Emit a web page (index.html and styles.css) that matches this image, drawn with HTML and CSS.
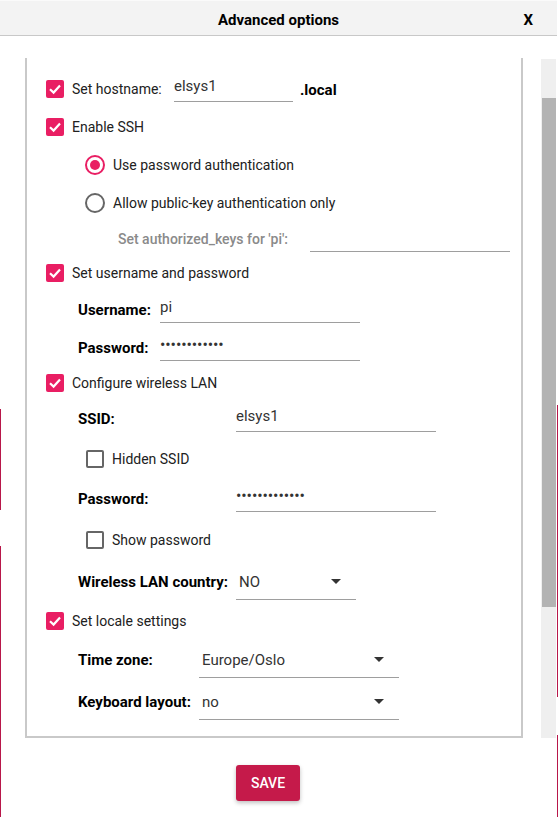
FILE: index.html
```html
<!DOCTYPE html>
<html lang="en">
<head>
<meta charset="utf-8">
<title>Advanced options</title>
<link rel="stylesheet" href="styles.css">
</head>
<body>
<div class="dialog">
  <header class="titlebar">
    <h1 class="title">Advanced options</h1>
    <button class="close" type="button">X</button>
  </header>
  <main class="content">
    <div class="scroller">
      <div class="panel">
        <div class="rows">
          <div class="row check-row">
            <span class="cb on"><svg viewBox="0 0 18 18"><path d="M4 9.2 L7.6 12.6 L14 5.6"/></svg></span>
            <span class="txt host-label">Set hostname:</span>
            <span class="field host-field">elsys1</span>
            <span class="suffix">.local</span>
          </div>
          <div class="row check-row">
            <span class="cb on"><svg viewBox="0 0 18 18"><path d="M4 9.2 L7.6 12.6 L14 5.6"/></svg></span>
            <span class="txt">Enable SSH</span>
          </div>
          <div class="row radio-row">
            <span class="radio on"></span>
            <span class="txt">Use password authentication</span>
          </div>
          <div class="row radio-row">
            <span class="radio"></span>
            <span class="txt">Allow public-key authentication only</span>
          </div>
          <div class="row keys-row">
            <span class="keys-label">Set authorized_keys for 'pi':</span>
            <span class="field wide"></span>
          </div>
          <div class="row check-row">
            <span class="cb on"><svg viewBox="0 0 18 18"><path d="M4 9.2 L7.6 12.6 L14 5.6"/></svg></span>
            <span class="txt">Set username and password</span>
          </div>
          <div class="row form-row">
            <span class="lbl lbl-user">Username:</span>
            <span class="field wide">pi</span>
          </div>
          <div class="row form-row">
            <span class="lbl lbl-user">Password:</span>
            <span class="field wide dots">••••••••••••</span>
          </div>
          <div class="row check-row">
            <span class="cb on"><svg viewBox="0 0 18 18"><path d="M4 9.2 L7.6 12.6 L14 5.6"/></svg></span>
            <span class="txt">Configure wireless LAN</span>
          </div>
          <div class="row form-row">
            <span class="lbl lbl-wifi">SSID:</span>
            <span class="field wide">elsys1</span>
          </div>
          <div class="row sub-row">
            <span class="cb"></span>
            <span class="txt">Hidden SSID</span>
          </div>
          <div class="row form-row">
            <span class="lbl lbl-wifi">Password:</span>
            <span class="field wide dots">•••••••••••••</span>
          </div>
          <div class="row sub-row">
            <span class="cb"></span>
            <span class="txt">Show password</span>
          </div>
          <div class="row form-row">
            <span class="lbl lbl-wifi">Wireless LAN country:</span>
            <span class="combo narrow"><span class="val">NO</span><span class="arrow"></span></span>
          </div>
          <div class="row check-row">
            <span class="cb on"><svg viewBox="0 0 18 18"><path d="M4 9.2 L7.6 12.6 L14 5.6"/></svg></span>
            <span class="txt">Set locale settings</span>
          </div>
          <div class="row form-row">
            <span class="lbl lbl-locale">Time zone:</span>
            <span class="combo wide"><span class="val">Europe/Oslo</span><span class="arrow"></span></span>
          </div>
          <div class="row form-row">
            <span class="lbl lbl-locale">Keyboard layout:</span>
            <span class="combo wide"><span class="val">no</span><span class="arrow"></span></span>
          </div>
        </div>
      </div>
      <div class="scrollbar"><div class="thumb"></div></div>
    </div>
    <div class="actions">
      <button class="save" type="button">SAVE</button>
    </div>
  </main>
</div>
<span class="edge edge-l1"></span>
<span class="edge edge-l2"></span>
<span class="edge edge-r1"></span>
<span class="edge edge-r2"></span>
</body>
</html>
```
FILE: styles.css
```css
* { box-sizing: border-box; }
html, body { margin: 0; padding: 0; background: #fff; }
body {
  width: 559px;
  height: 817px;
  overflow: hidden;
  position: relative;
  font-family: Roboto, "Noto Sans", "Liberation Sans", sans-serif;
  font-size: 14px;
  color: #212121;
}
.dialog {
  width: 557px;
  height: 817px;
  background: #fff;
}
.titlebar {
  height: 36px;
  background: #f3f3f3;
  border-top: 1px solid #fafafa;
  border-bottom: 1px solid #c8c8c8;
  display: grid;
  grid-template-columns: 1fr auto 1fr;
  align-items: center;
  padding-top: 3px;
}
.title {
  grid-column: 2;
  margin: 0;
  font-size: 15px;
  font-weight: 700;
  color: #000;
}
.close {
  grid-column: 3;
  justify-self: end;
  margin-right: 24px;
  padding: 0;
  border: 0;
  background: none;
  font-family: Roboto, sans-serif;
  font-size: 15px;
  font-weight: 700;
  color: #000;
}
.content { padding-top: 22px; }
.scroller { display: flex; align-items: flex-start; }
.panel {
  margin-left: 25px;
  width: 498px;
  height: 680px;
  border: 2px solid #c9c9c9;
  border-top: 0;
  padding-top: 11px;
}
.scrollbar {
  margin-left: 18px;
  margin-top: 1px;
  width: 15px;
  height: 679px;
  background: #efefef;
  padding-top: 39px;
}
.thumb {
  margin-left: 1px;
  height: 509px;
  background: #b3b3b3;
}
.rows {
  display: grid;
  grid-template-rows: 39px 38px 38px 38px 34px 34px 40px 36px 34px 38px 42px 38px 44px 40px 38px 40px 44px;
}
.row { display: flex; align-items: center; }
.check-row { padding-left: 19px; }
.radio-row { padding-left: 58px; }
.sub-row { padding-left: 59px; }
.keys-row { padding-left: 91px; }
.form-row { padding-left: 51px; }

.cb {
  width: 18px;
  height: 18px;
  flex: none;
  border: 2px solid #666;
  border-radius: 2px;
  margin-right: 8px;
  background: #fff;
}
.cb.on {
  border: 0;
  background: #e91e63;
}
.cb svg { display: block; width: 18px; height: 18px; }
.cb path { fill: none; stroke: #fff; stroke-width: 2.2; }

.radio {
  width: 20px;
  height: 20px;
  flex: none;
  border: 2px solid #666;
  border-radius: 50%;
  margin-right: 8px;
  position: relative;
}
.radio.on { border-color: #e91e63; }
.radio.on::after {
  content: "";
  position: absolute;
  left: 3px; top: 3px;
  width: 10px; height: 10px;
  border-radius: 50%;
  background: #e91e63;
}
.txt { color: #212121; }
.host-label { width: 102px; flex: none; }
.field {
  height: 26px;
  line-height: 20px;
  border-bottom: 1px solid #9e9e9e;
  color: #333;
  font-size: 15px;
}
.host-field { width: 119px; }
.field.wide { width: 200px; }
.suffix {
  margin-left: 7px;
  font-size: 15px;
  font-weight: 700;
  color: #000;
  padding-top: 2px;
}
.keys-label {
  width: 192px;
  flex: none;
  color: #8a8a8a;
  font-weight: 500;
}
.lbl { font-size: 15px; font-weight: 700; color: #000; flex: none; }
.lbl-user { width: 82px; }
.lbl-wifi { width: 158px; }
.lbl-locale { width: 121px; }
.dots { letter-spacing: -0.1px; font-size: 16px; }
.combo {
  height: 36px;
  display: flex;
  align-items: center;
  justify-content: space-between;
  padding-left: 3px;
  padding-right: 15px;
  border-bottom: 1px solid #9e9e9e;
  color: #333;
  font-size: 15px;
}
.combo.narrow { width: 120px; }
.combo.wide { width: 200px; }
.arrow {
  width: 0; height: 0;
  border-left: 5px solid transparent;
  border-right: 5px solid transparent;
  border-top: 5px solid #333;
}
.actions {
  display: flex;
  justify-content: center;
  padding-right: 21px;
  margin-top: 27px;
}
.save {
  width: 64px;
  height: 36px;
  border: 0;
  border-radius: 3px;
  background: #c51a4a;
  color: #fff;
  font-family: Roboto, sans-serif;
  font-size: 14px;
  font-weight: 500;
  box-shadow: 0 2px 4px rgba(0,0,0,0.25);
}
.edge {
  position: absolute;
  width: 1px;
  background: #b8174a;
}
.edge-l1 { left: 0; top: 409px; height: 101px; }
.edge-l2 { left: 0; top: 546px; height: 271px; }
.edge-r1 { left: 557px; top: 405px; height: 292px; }
.edge-r2 { left: 557px; top: 735px; height: 82px; }
```
